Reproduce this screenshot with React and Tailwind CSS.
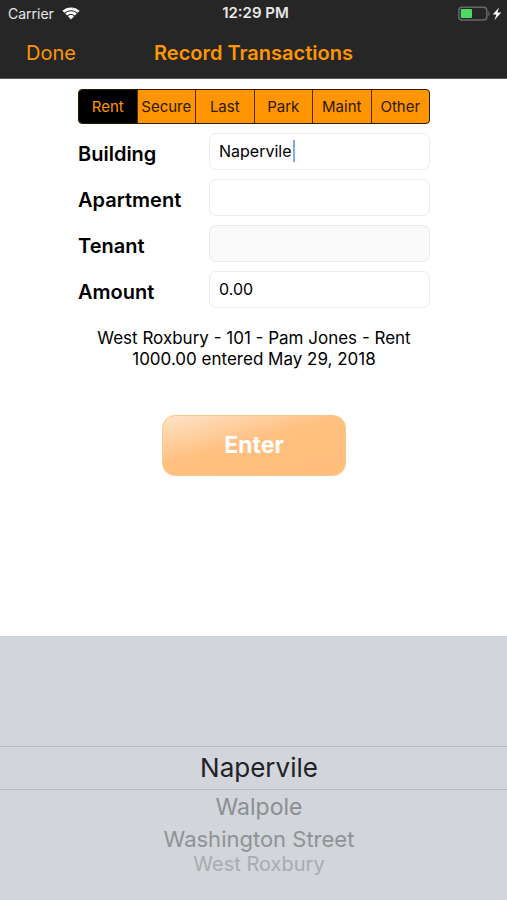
import React, { useState } from "react";

const categories = ["Rent", "Secure", "Last", "Park", "Maint", "Other"];

const fields = [
  { id: "building", label: "Building", value: "Napervile", focused: true },
  { id: "apartment", label: "Apartment", value: "" },
  { id: "tenant", label: "Tenant", value: "", disabled: true },
  { id: "amount", label: "Amount", value: "0.00" },
];

// rows get smaller and fainter as the wheel turns away
const buildings = [
  { name: "Napervile", style: "h-[44px] border-y border-[#b9bcc1] text-[26px] text-[#1f2226]" },
  { name: "Walpole", style: "h-[34px] text-[23px] text-[#8c8f93]" },
  { name: "Washington Street", style: "h-[30px] text-[22px] text-[#8f9296]" },
  { name: "West Roxbury", style: "h-[20px] text-[20px] text-[#a9acb0]" },
];

const WifiIcon = () => (
  <svg width="18" height="14" viewBox="0 0 18 14" fill="#fff" aria-hidden="true">
    <path d="M9 0.4C5.7 0.4 2.8 1.6 0.4 3.8L2.4 5.8C4.1 4.2 6.4 3.2 9 3.2s4.9 1 6.6 2.6l2-2C15.2 1.6 12.3 0.4 9 0.4Z" />
    <path d="M9 4.3C6.8 4.3 4.8 5.1 3.2 6.6L5.1 8.5C6.1 7.5 7.4 6.9 9 6.9s2.9 0.6 3.9 1.6l1.9-1.9C13.2 5.1 11.2 4.3 9 4.3Z" />
    <path d="M9 8C7.8 8 6.7 8.5 5.9 9.3L9 12.6 12.1 9.3C11.3 8.5 10.2 8 9 8Z" />
  </svg>
);

const BatteryIcon = () => (
  <svg width="45" height="16" viewBox="0 0 45 16" aria-hidden="true">
    <rect x="0.8" y="1.3" width="28" height="12.6" rx="3.2" fill="none" stroke="#66686a" strokeWidth="1.5" />
    <path d="M30.3 5.2C32.1 5.8 32.1 9.4 30.3 10Z" fill="#66686a" />
    <rect x="2.8" y="3.1" width="11.2" height="9" rx="1" fill="#4cd964" />
    <path d="M41 1.4L34.8 8.6H38.4L36.4 14.2L43.2 6.6H39.4Z" fill="#fff" />
  </svg>
);

const App = () => {
  const [category, setCategory] = useState("Rent");

  return (
    <div className="min-h-screen flex flex-col bg-white font-['Inter',sans-serif] text-black">
      <header className="bg-[#262626] border-b border-[#5a5a5a]">
        <div className="h-[27px] grid grid-cols-[1fr_auto_1fr] items-center pl-2 pr-1 text-[14px] text-[#e8e8e8]">
          <div className="flex items-center gap-2">
            <span>Carrier</span>
            <WifiIcon />
          </div>
          <span className="text-[15px] font-semibold">12:29 PM</span>
          <div className="flex justify-end">
            <BatteryIcon />
          </div>
        </div>
        <div className="h-[51px] grid grid-cols-[1fr_auto_1fr] items-center px-[26px] text-[#ff9500]">
          <button type="button" className="justify-self-start text-[20px]">
            Done
          </button>
          <h1 className="text-[20px] font-semibold">Record Transactions</h1>
        </div>
      </header>

      <main className="flex-1 flex flex-col pl-[78px] pr-[77px] pt-[10px]">
        <div
          role="radiogroup"
          aria-label="Transaction type"
          className="h-[35px] flex overflow-hidden rounded-[4px] border border-[#2b1a00] divide-x divide-[#4a2c00] bg-[#ff9500]"
        >
          {categories.map((name) => (
            <label
              key={name}
              className="flex-1 basis-0 min-w-0 flex items-center justify-center pt-[2px] text-[15px] text-[#2b1a00] has-checked:bg-black has-checked:text-[#ff9500]"
            >
              <input
                type="radio"
                name="category"
                className="sr-only"
                checked={category === name}
                onChange={() => setCategory(name)}
              />
              {name}
            </label>
          ))}
        </div>

        <form className="mt-[9px] flex flex-col gap-[9px]">
          {fields.map((field) => (
            <div key={field.id} className="flex items-center">
              <label htmlFor={field.id} className="w-[131px] pt-1 text-[20px] font-semibold">
                {field.label}
              </label>
              <div className="relative flex-1 min-w-0">
                <input
                  id={field.id}
                  type="text"
                  defaultValue={field.value}
                  disabled={field.disabled}
                  className="block w-full h-[37px] rounded-[7px] border border-[#ebebeb] px-[9px] pb-[2px] text-[16px] disabled:bg-[#fafafa]"
                />
                {field.focused && (
                  <span className="absolute left-[84px] top-[7px] h-[22px] w-[2px] bg-[#8fa4f0]"></span>
                )}
              </div>
            </div>
          ))}
        </form>

        <p className="mt-5 text-center text-[17px] leading-[21px]">
          West Roxbury - 101 - Pam Jones - Rent
          <br />
          1000.00 entered May 29, 2018
        </p>

        <button
          type="button"
          className="mt-[45px] self-center w-[184px] h-[61px] rounded-[13px] border border-[#ffc58c] bg-linear-165 from-[#ffe3c8] via-[#ffc080] via-45% to-[#ffbd7c] text-[23px] font-bold text-white"
        >
          Enter
        </button>
      </main>

      <ul
        role="listbox"
        aria-label="Buildings"
        className="h-[264px] bg-[#d2d5da] pt-[110px] text-center"
      >
        {buildings.map((building, index) => (
          <li
            key={building.name}
            role="option"
            aria-selected={index === 0}
            className={`flex items-center justify-center pl-[11px] leading-none ${building.style}`}
          >
            {building.name}
          </li>
        ))}
      </ul>
    </div>
  );
};

export default App;
